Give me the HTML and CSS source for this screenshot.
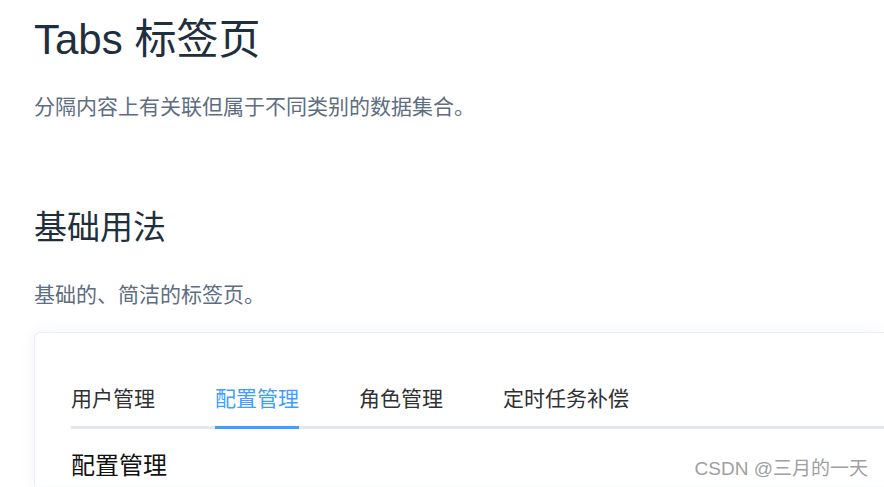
FILE: index.html
```html
<!DOCTYPE html>
<html lang="zh-CN">
<head>
<meta charset="utf-8">
<title>Tabs 标签页</title>
<link rel="stylesheet" href="styles.css">
</head>
<body>
<main class="page">
  <h1 class="title">Tabs 标签页</h1>
  <p class="desc">分隔内容上有关联但属于不同类别的数据集合。</p>
  <h2 class="section">基础用法</h2>
  <p class="desc desc-sub">基础的、简洁的标签页。</p>
  <div class="demo">
    <div class="tabs-header">
      <div class="tab">用户管理</div>
      <div class="tab is-active">配置管理</div>
      <div class="tab">角色管理</div>
      <div class="tab">定时任务补偿</div>
    </div>
    <div class="tab-content">配置管理</div>
  </div>
</main>
<div class="watermark">CSDN @三月的一天</div>
</body>
</html>
```

FILE: styles.css
```css
html, body {
  margin: 0;
  padding: 0;
  background: #ffffff;
  overflow: hidden;
  width: 884px;
  height: 487px;
}

body {
  font-family: "Liberation Sans", "Noto Sans CJK SC", sans-serif;
  position: relative;
}

.page {
  padding: 0 0 0 34px;
}

.title {
  margin: 15px 0 0;
  font-size: 42px;
  line-height: 1.2;
  font-weight: 400;
  color: #1f2f3d;
}

.desc {
  margin: 26px 0 0;
  font-size: 21px;
  line-height: 31.5px;
  color: #5e6d82;
}

.section {
  margin: 85px 0 0;
  font-size: 33px;
  line-height: 1.2;
  font-weight: 400;
  color: #1f2f3d;
}

.desc-sub {
  margin-top: 32px;
}

.demo {
  margin-top: 21px;
  border: 1px solid #ebeef5;
  border-right: none;
  border-bottom: none;
  border-top-left-radius: 6px;
  box-shadow: 0 0 18px rgba(40, 60, 140, 0.05);
  padding: 36px 0 5px 36px;
  background: #fff;
}

.tabs-header {
  display: flex;
  position: relative;
  height: 60px;
  margin-bottom: 22px;
}

.tabs-header::after {
  content: "";
  position: absolute;
  left: 0;
  right: 0;
  bottom: 0;
  height: 3px;
  background: #e4e7ed;
}

.tab {
  position: relative;
  height: 60px;
  line-height: 60px;
  padding: 0 30px;
  font-size: 21px;
  color: #303133;
}

.tab:first-child {
  padding-left: 0;
}

.tab.is-active {
  color: #409eff;
}

.tab.is-active::after {
  content: "";
  position: absolute;
  left: 30px;
  right: 30px;
  bottom: 0;
  height: 3px;
  background: #409eff;
  z-index: 1;
}

.tab-content {
  font-size: 24px;
  line-height: 30px;
  color: #111;
}

.watermark {
  position: absolute;
  right: 16px;
  bottom: 6px;
  font-size: 19px;
  line-height: 24px;
  color: #a0a0a0;
  text-shadow: 0 0 2px #fff, 0 0 1px #fff;
}
```
